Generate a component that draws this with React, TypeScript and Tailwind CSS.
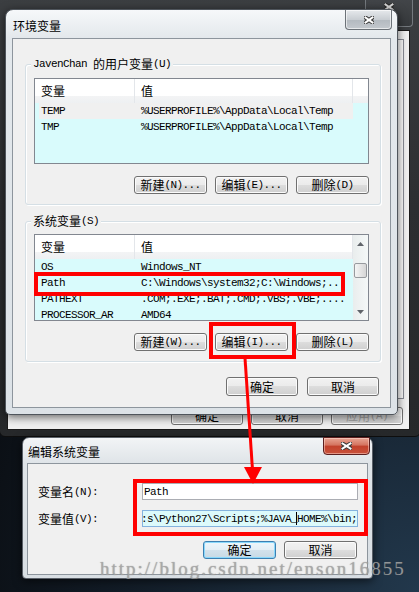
import React from "react";

const mono = "[font-family:'Liberation_Mono',monospace] text-[11px] tracking-[-0.6px] leading-[12px] whitespace-pre";
const cjk = "[font-family:'Noto_Sans_CJK_SC',sans-serif] text-[12px] leading-[12px] whitespace-pre";

function M({ children, className = "" }: { children: React.ReactNode; className?: string }) {
  return <span className={`${mono} ${className}`}>{children}</span>;
}
function C({ children, className = "" }: { children: React.ReactNode; className?: string }) {
  return <span className={`${cjk} ${className}`}>{children}</span>;
}

function Btn({
  w,
  h = "h-[18px]",
  children,
  def = false,
  disabled = false,
}: {
  w: string;
  h?: string;
  children: React.ReactNode;
  def?: boolean;
  disabled?: boolean;
}) {
  const skin = def
    ? "border-[#3c7fb1] bg-[linear-gradient(180deg,#eef6fb_0%,#e3eef5_50%,#d3e2ec_50%,#c8d9e4_100%)] shadow-[inset_0_0_0_1px_#8ad8fb]"
    : "border-[#707070] bg-[linear-gradient(180deg,#f2f2f2_0%,#ebebeb_50%,#dddddd_50%,#cfcfcf_100%)] shadow-[inset_0_0_0_1px_#fbfbfb]";
  return (
    <div
      className={`${w} ${h} shrink-0 rounded-[3px] border ${skin} flex items-center justify-center ${
        disabled ? "text-[#a3a3a3]" : "text-black"
      }`}
    >
      {children}
    </div>
  );
}

function CloseX({ w, h, fg = "#ffffff", bd = "#3a3a3a" }: { w: number; h: number; fg?: string; bd?: string }) {
  return (
    <svg width={w} height={h} viewBox={`0 0 ${w} ${h}`}>
      <g strokeLinecap="square">
        <line x1={1.5} y1={1.5} x2={w - 1.5} y2={h - 1.5} stroke={bd} strokeWidth={4} />
        <line x1={w - 1.5} y1={1.5} x2={1.5} y2={h - 1.5} stroke={bd} strokeWidth={4} />
        <line x1={1.5} y1={1.5} x2={w - 1.5} y2={h - 1.5} stroke={fg} strokeWidth={2} />
        <line x1={w - 1.5} y1={1.5} x2={1.5} y2={h - 1.5} stroke={fg} strokeWidth={2} />
      </g>
    </svg>
  );
}

type Row = { name: string; value: string; sel?: boolean };

function ListView({ rows, h, scroll }: { rows: Row[]; h: string; scroll?: boolean }) {
  return (
    <div className={`w-[335px] ${h} shrink-0 border border-[#828790] bg-[#d9fbfc] overflow-hidden flex`}>
      <div className="flex-1 min-w-0 flex flex-col">
        <div className="h-[24px] shrink-0 flex bg-[linear-gradient(180deg,#ffffff_0%,#ffffff_70%,#f3f4f5_71%,#eef0f2_100%)]">
          <div className="w-[100px] shrink-0 border-r border-[#e3e6ea] flex items-center pl-[6px]">
            <C>变量</C>
          </div>
          <div className="w-[218px] shrink-0 border-r border-[#e3e6ea] flex items-center pl-[6px]">
            <C>值</C>
          </div>
          <div className="flex-1" />
        </div>
        {rows.map((r) => (
          <div key={r.name} className="h-[16px] shrink-0 flex">
            <div className="w-[4px] shrink-0" />
            <div className={`flex w-[314px] shrink-0 ${r.sel ? "bg-[#f0f0f0]" : ""}`}>
              <div className="w-[96px] shrink-0 pl-[2px] flex items-center overflow-hidden">
                <M>{r.name}</M>
              </div>
              <div className="flex-1 pl-[6px] flex items-center overflow-hidden">
                <M>{r.value}</M>
              </div>
            </div>
          </div>
        ))}
      </div>
      {scroll && (
        <div className="w-[15px] shrink-0 flex flex-col bg-[linear-gradient(90deg,#e9eded,#f5f8f8)]">
          <div className="h-[17px] flex items-center justify-center">
            <svg width="7" height="4" viewBox="0 0 7 4">
              <path d="M0 4 L3.5 0 L7 4 Z" fill="#60646a" />
            </svg>
          </div>
          <div className="h-[11px]" />
          <div className="h-[15px] mx-[1px] rounded-[2px] border border-[#979a9e] bg-[linear-gradient(90deg,#f5f5f5,#e2e2e2_60%,#d6d6d6)]" />
          <div className="flex-1" />
          <div className="h-[17px] flex items-center justify-center">
            <svg width="7" height="4" viewBox="0 0 7 4">
              <path d="M0 0 L7 0 L3.5 4 Z" fill="#60646a" />
            </svg>
          </div>
        </div>
      )}
    </div>
  );
}

function Group({ label, children, mt }: { label: React.ReactNode; children: React.ReactNode; mt: string }) {
  return (
    <div
      className={`relative ${mt} ml-[12px] w-[356px] h-[141px] shrink-0 rounded-[3px] border border-[#d5dfe5] shadow-[inset_1px_1px_0_#ffffff,1px_1px_0_#ffffff] flex flex-col pl-[8px]`}
    >
      <div className="absolute left-[5px] top-[-7px] px-[2px] h-[12px] bg-[#f0f0f0] flex items-center">{label}</div>
      {children}
    </div>
  );
}

const userRows: Row[] = [
  { name: "TEMP", value: "%USERPROFILE%\\AppData\\Local\\Temp", sel: true },
  { name: "TMP", value: "%USERPROFILE%\\AppData\\Local\\Temp" },
];
const sysRows: Row[] = [
  { name: "OS", value: "Windows_NT" },
  { name: "Path", value: "C:\\Windows\\system32;C:\\Windows;..." },
  { name: "PATHEXT", value: ".COM;.EXE;.BAT;.CMD;.VBS;.VBE;...." },
  { name: "PROCESSOR_AR", value: "AMD64" },
];

export default function App() {
  return (
    <div className="relative w-[419px] h-[592px] overflow-hidden bg-[radial-gradient(circle_at_100%_100%,#22384c_0%,#121c27_40%,#07080a_75%)]">
      {/* Background window (系统属性) */}
      <div className="absolute left-[-1px] top-[-22px] w-[422px] h-[459px] rounded-[6px] border border-[#0e0e0e] bg-[linear-gradient(180deg,#3d4043_0%,#2c2e31_50%,#26282a_100%)] flex flex-col">
        <div className="h-[51px] shrink-0 relative">
          <div className="absolute right-[7px] top-0 w-[48px] h-[48px] rounded-b-[4px] border border-t-0 border-[#74797e] bg-[linear-gradient(180deg,#4c4f53,#36393c)] flex justify-center pt-[24px]">
            <CloseX w={10} h={8} fg="#d8d8d8" bd="#2a2a2a" />
          </div>
        </div>
        <div className="ml-[7px] mr-[10px] mb-[6px] flex-1 bg-[#f0f0f0] border border-[#1b1b1b] flex flex-col">
          <div className="flex-1 mt-[8px] ml-[6px] mr-[5px] mb-[8px] border border-[#898c95] bg-[#fcfcfc]" />
          <div className="flex justify-end gap-[8px] pr-[6px] pb-[4px]">
            <Btn w="w-[72px]">
              <C>确定</C>
            </Btn>
            <Btn w="w-[72px]">
              <C>取消</C>
            </Btn>
            <Btn w="w-[72px]" disabled>
              <C>应用</C>
              <M>(A)</M>
            </Btn>
          </div>
        </div>
      </div>

      {/* 环境变量 dialog */}
      <div className="absolute left-[5px] top-[9px] w-[393px] h-[406px] rounded-t-[8px] rounded-b-[5px] border border-[#4f555c] bg-[linear-gradient(180deg,#f6f8fa_0px,#e3e8ec_28px,#dce2e7_100%)] shadow-[0_2px_10px_rgba(0,0,0,0.6)] flex flex-col">
        <div className="h-[28px] shrink-0 relative flex items-center pl-[7px] pt-[3px]">
          <C>环境变量</C>
          <div className="absolute right-[5px] top-0 w-[47px] h-[20px] rounded-b-[4px] border border-t-0 border-[#6c7278] bg-[linear-gradient(180deg,#e6e9ec_0%,#c9ced3_50%,#b3b9bf_51%,#c3c8cd_100%)] shadow-[inset_0_0_0_1px_rgba(255,255,255,0.6)] flex items-center justify-center">
            <CloseX w={10} h={8} />
          </div>
        </div>
        <div className="mx-[6px] h-[370px] shrink-0 border border-[#8d959d] bg-[#f0f0f0] flex flex-col">
          <Group
            mt="mt-[25px]"
            label={
              <>
                <M>JavenChan </M>
                <C>的用户变量</C>
                <M>(U)</M>
              </>
            }
          >
            <div className="h-[13px] shrink-0" />
            <ListView rows={userRows} h="h-[86px]" />
            <div className="mt-[12px] flex justify-end gap-[8px] pr-[11px]">
              <Btn w="w-[73px]">
                <C>新建</C>
                <M>(N)...</M>
              </Btn>
              <Btn w="w-[73px]">
                <C>编辑</C>
                <M>(E)...</M>
              </Btn>
              <Btn w="w-[73px]">
                <C>删除</C>
                <M>(D)</M>
              </Btn>
            </div>
          </Group>
          <Group
            mt="mt-[16px]"
            label={
              <>
                <C>系统变量</C>
                <M>(S)</M>
              </>
            }
          >
            <div className="h-[12px] shrink-0" />
            <ListView rows={sysRows} h="h-[87px]" scroll />
            <div className="mt-[12px] flex justify-end gap-[8px] pr-[11px]">
              <Btn w="w-[73px]">
                <C>新建</C>
                <M>(W)...</M>
              </Btn>
              <Btn w="w-[73px]">
                <C>编辑</C>
                <M>(I)...</M>
              </Btn>
              <Btn w="w-[73px]">
                <C>删除</C>
                <M>(L)</M>
              </Btn>
            </div>
          </Group>
          <div className="mt-[15px] flex justify-end gap-[9px] pr-[11px]">
            <Btn w="w-[72px]" h="h-[19px]">
              <C>确定</C>
            </Btn>
            <Btn w="w-[72px]" h="h-[19px]">
              <C>取消</C>
            </Btn>
          </div>
        </div>
      </div>

      {/* 编辑系统变量 dialog */}
      <div className="absolute left-[22px] top-[437px] w-[351px] h-[142px] rounded-t-[7px] rounded-b-[4px] border border-[#5a6068] bg-[linear-gradient(180deg,#f2f4f6_0px,#dfe4e8_25px,#d8dee3_100%)] shadow-[0_2px_10px_rgba(0,0,0,0.6)] flex flex-col">
        <div className="h-[25px] shrink-0 relative flex items-center pl-[5px] pt-[2px]">
          <C>编辑系统变量</C>
          <div className="absolute right-[2px] top-[-1px] w-[47px] h-[18px] rounded-b-[4px] border border-[#5c1f1f] bg-[linear-gradient(180deg,#e8a493_0%,#d4735f_45%,#c2412c_50%,#c9523b_100%)] shadow-[inset_0_0_0_1px_rgba(255,220,210,0.5)] flex items-center justify-center">
            <CloseX w={11} h={8} />
          </div>
        </div>
        <div className="mx-[4px] h-[112px] shrink-0 border border-[#8d959d] bg-[#f0f0f0] flex flex-col pt-[19px]">
          <div className="h-[17px] flex items-center">
            <div className="w-[114px] shrink-0 pl-[10px] flex items-center">
              <C>变量名</C>
              <M>(N):</M>
            </div>
            <div className="w-[216px] h-[17px] shrink-0 border border-[#abadb3] bg-white flex items-center pl-[1px] overflow-hidden">
              <M>Path</M>
            </div>
          </div>
          <div className="h-[17px] mt-[10px] flex items-center">
            <div className="w-[114px] shrink-0 pl-[10px] flex items-center">
              <C>变量值</C>
              <M>(V):</M>
            </div>
            <div className="w-[216px] h-[17px] shrink-0 border border-[#84b3de] bg-[#dcfafb] flex items-center overflow-hidden">
              <div className="-ml-[2px] flex items-center shrink-0">
                <M>{":s\\Python27\\Scripts;%JAVA_"}</M>
                <span className="w-[1px] h-[13px] bg-black -ml-[1px]" />
                <M>{"HOME%\\bin;"}</M>
              </div>
            </div>
          </div>
          <div className="mt-[14px] flex justify-end gap-[8px] pr-[10px]">
            <Btn w="w-[73px]" def>
              <C>确定</C>
            </Btn>
            <Btn w="w-[73px]">
              <C>取消</C>
            </Btn>
          </div>
        </div>
      </div>

      {/* Red annotations */}
      <div className="absolute left-[34px] top-[272px] w-[311px] h-[24px] border-[4px] border-[#ff0000]" />
      <div className="absolute left-[209px] top-[322px] w-[87px] h-[37px] border-[4px] border-[#ff0000]" />
      <div className="absolute left-[133px] top-[479px] w-[235px] h-[57px] border-[4px] border-[#ff0000]" />
      <svg className="absolute left-0 top-0" width="419" height="592" viewBox="0 0 419 592">
        <line x1="245" y1="358" x2="252.5" y2="470" stroke="#ff0000" strokeWidth="3" />
        <polygon points="244,467 262,467 253,484" fill="#ff0000" />
      </svg>

      {/* Watermark */}
      <div className="absolute left-[100px] top-[559px] [font-family:'Liberation_Serif',serif] text-[19px] tracking-[2px] leading-none whitespace-pre text-[rgba(170,170,170,0.78)] [text-shadow:0_0_1px_rgba(90,90,90,0.6)]">
        http://blog.csdn.net/enson16855
      </div>
    </div>
  );
}
